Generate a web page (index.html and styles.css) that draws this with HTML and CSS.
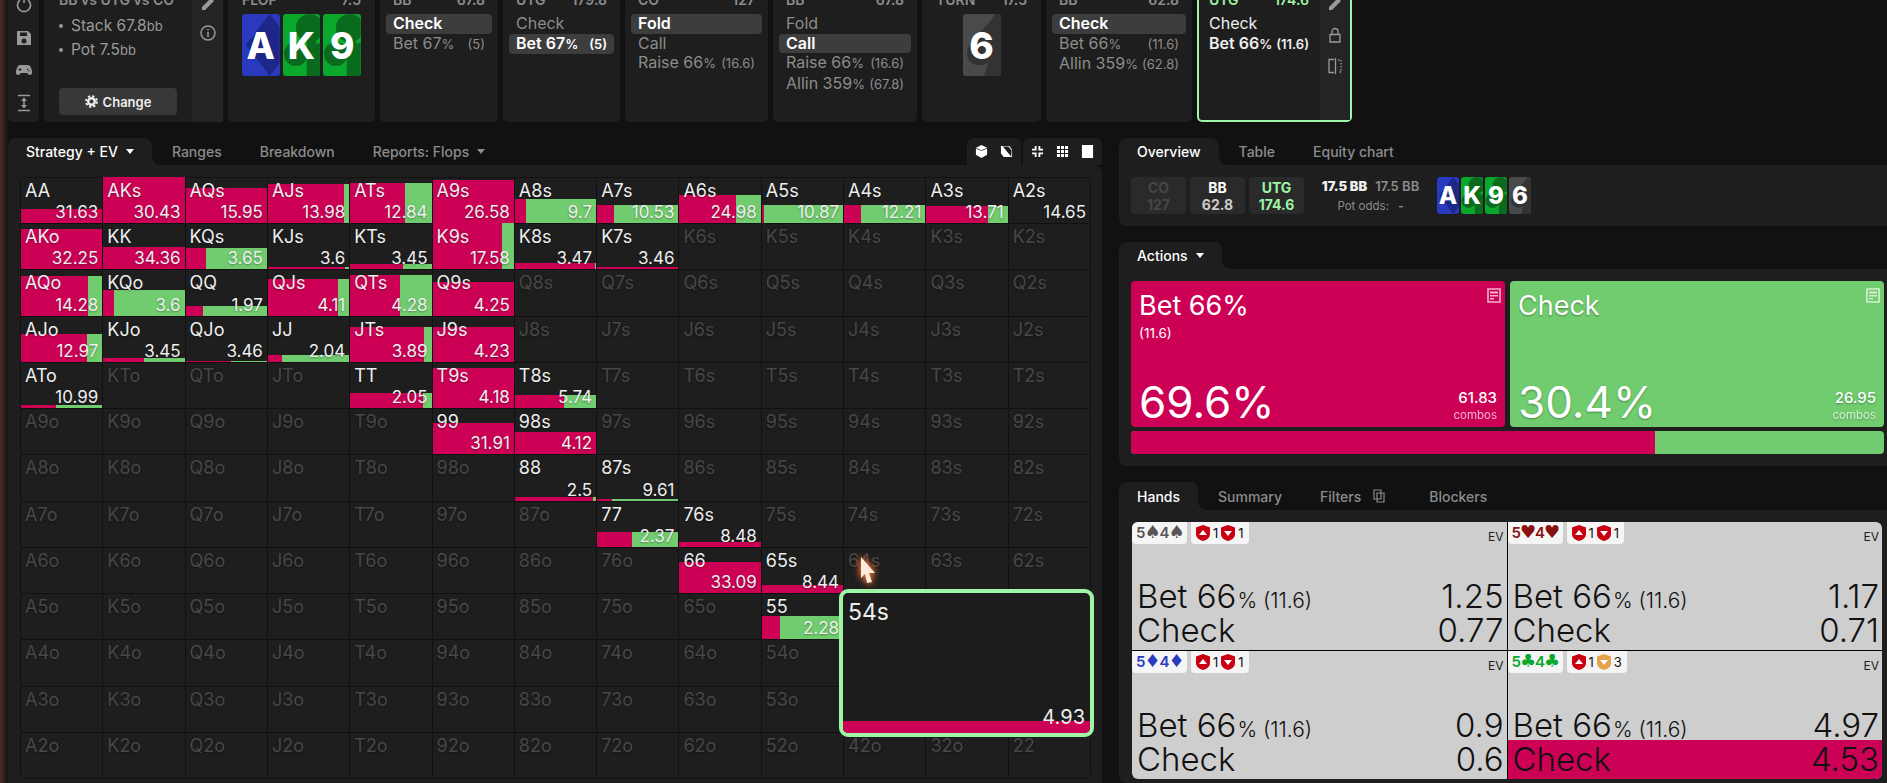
FILE: index.html
```html
<!DOCTYPE html>
<html lang="en">
<head>
  <meta charset="UTF-8">
  <meta name="viewport" content="width=device-width, initial-scale=1.0">
  <title>Solver - Strategy + EV</title>
  <link rel="stylesheet" href="styles.css">
</head>
<body>
  <svg class="defs" width="0" height="0">
    <symbol id="art-diamond" viewBox="0 0 38 62" preserveAspectRatio="none"><polygon points="28,0 52,31 28,62 4,31"/></symbol>
    <symbol id="art-club" viewBox="0 0 38 62" preserveAspectRatio="none"><circle cx="27" cy="14" r="14"/><circle cx="13" cy="40" r="12"/><circle cx="41" cy="40" r="12"/><polygon points="24,20 32,20 40,62 24,62"/></symbol>
    <symbol id="art-spade" viewBox="0 0 38 62" preserveAspectRatio="none"><path d="M32 0C25 14 4 26 4 40C4 50 15 54 25 49L21 62H40V0Z"/></symbol>
    <symbol id="shield-up" viewBox="0 0 14 16"><path fill="currentColor" d="M7 0L14 2.5V9C14 12.5 11 15 7 16C3 15 0 12.5 0 9V2.5Z"/><path fill="#fff" d="M7 5L11 10H3Z"/></symbol>
    <symbol id="shield-down" viewBox="0 0 14 16"><path fill="currentColor" d="M7 0L14 2.5V9C14 12.5 11 15 7 16C3 15 0 12.5 0 9V2.5Z"/><path fill="#fff" d="M3 6H11L7 11Z"/></symbol>
    <symbol id="note" viewBox="0 0 14 15"><path fill="none" stroke="currentColor" stroke-width="1.6" d="M1 1H13V14H1Z"/><path fill="currentColor" d="M3 3.5H11V5.5H3ZM3 7H11V8.5H3ZM3 10H7V11.5H3Z"/></symbol>
  </svg>

  <!-- hand tree -->
  <div class="topbar">
    <div class="panel side-icons">
      <svg class="ico" viewBox="0 0 18 18"><path fill="none" stroke="currentColor" stroke-width="1.6" d="M5 4A6.5 6.5 0 1 0 13 4M9 1V7"/></svg>
      <svg class="ico" viewBox="0 0 18 18"><path fill="currentColor" d="M2 2H13L16 5V16H2ZM5 3.5V7H12V3.5ZM9 9.5A2.5 2.5 0 1 0 9 14.5A2.5 2.5 0 1 0 9 9.5Z"/></svg>
      <svg class="ico" viewBox="0 0 18 18"><path fill="currentColor" d="M5 4H13C15 4 16 6 17 10C17.500 13 16 14.500 14.500 14C13 13.500 12.500 12 11.500 12H6.500C5.500 12 5 13.500 3.500 14C2 14.500 .5 13 1 10C2 6 3 4 5 4ZM4.500 7V8H3.500V9H4.500V10H5.500V9H6.500V8H5.500V7ZM12.500 7.500A.7 .7 0 1 0 12.500 8.900A.7 .7 0 1 0 12.500 7.500ZM14 9A.7 .7 0 1 0 14 10.400A.7 .7 0 1 0 14 9Z"/></svg>
      <svg class="ico" viewBox="0 0 18 18"><path fill="none" stroke="currentColor" stroke-width="1.6" d="M3 1.500H15M3 16.500H15M9 4.500V13.500"/><path fill="currentColor" d="M9 3.500L12 7H6ZM9 14.500L6 11H12Z"/></svg>
    </div>

    <div class="panel setup">
      <div class="setup-main">
        <div class="node-head">BB vs UTG vs CO</div>
        <ul class="setup-list">
          <li>Stack 67.8<small>bb</small></li>
          <li>Pot 7.5<small>bb</small></li>
        </ul>
        <button class="change-btn">
          <svg class="gear" viewBox="0 0 14 14"><circle cx="7" cy="7" r="3.500" fill="none" stroke="currentColor" stroke-width="2.600"/><circle cx="7" cy="7" r="5.800" fill="none" stroke="currentColor" stroke-width="2.200" stroke-dasharray="2.500 2.050"/></svg>
          Change
        </button>
      </div>
      <div class="node-strip">
        <svg class="ico" viewBox="0 0 18 18"><path fill="currentColor" d="M3 12L12 3L15 6L6 15H3Z"/></svg>
        <svg class="ico" viewBox="0 0 18 18"><circle cx="9" cy="9" r="7" fill="none" stroke="currentColor" stroke-width="1.500"/><path fill="currentColor" d="M8.200 8H9.800V13H8.200ZM8.200 5H9.800V6.600H8.200Z"/></svg>
      </div>
    </div>

    <div class="panel street">
      <div class="node-head"><span>FLOP</span><span>7.5</span></div>
      <div class="board">
        <div class="card c-blue"><svg><use href="#art-diamond"/></svg><b>A</b></div>
        <div class="card c-green"><svg><use href="#art-club"/></svg><b>K</b></div>
        <div class="card c-green"><svg><use href="#art-club"/></svg><b>9</b></div>
      </div>
    </div>

    <div class="panel node">
      <div class="node-head"><span>BB</span><span>67.8</span></div>
      <div class="act on"><span>Check</span></div>
      <div class="act"><span>Bet 67<small>%</small></span><em>(5)</em></div>
    </div>

    <div class="panel node">
      <div class="node-head"><span>UTG</span><span>179.8</span></div>
      <div class="act"><span>Check</span></div>
      <div class="act on"><span>Bet 67<small>%</small></span><em>(5)</em></div>
    </div>

    <div class="panel node">
      <div class="node-head"><span>CO</span><span>127</span></div>
      <div class="act on"><span>Fold</span></div>
      <div class="act"><span>Call</span></div>
      <div class="act"><span>Raise 66<small>%</small></span><em>(16.6)</em></div>
    </div>

    <div class="panel node">
      <div class="node-head"><span>BB</span><span>67.8</span></div>
      <div class="act"><span>Fold</span></div>
      <div class="act on"><span>Call</span></div>
      <div class="act"><span>Raise 66<small>%</small></span><em>(16.6)</em></div>
      <div class="act"><span>Allin 359<small>%</small></span><em>(67.8)</em></div>
    </div>

    <div class="panel street">
      <div class="node-head"><span>TURN</span><span>17.5</span></div>
      <div class="board">
        <div class="card c-gray"><svg><use href="#art-spade"/></svg><b>6</b></div>
      </div>
    </div>

    <div class="panel node">
      <div class="node-head"><span>BB</span><span>62.8</span></div>
      <div class="act on"><span>Check</span></div>
      <div class="act"><span>Bet 66<small>%</small></span><em>(11.6)</em></div>
      <div class="act"><span>Allin 359<small>%</small></span><em>(62.8)</em></div>
    </div>

    <div class="panel node current">
      <div class="current-main">
        <div class="node-head"><span>UTG</span><span>174.6</span></div>
        <div class="act bright"><span>Check</span></div>
        <div class="act bright strong"><span>Bet 66<small>%</small></span><em>(11.6)</em></div>
      </div>
      <div class="node-strip">
        <svg class="ico" viewBox="0 0 18 18"><path fill="currentColor" d="M3 12L12 3L15 6L6 15H3Z"/></svg>
        <svg class="ico" viewBox="0 0 18 18"><path fill="none" stroke="currentColor" stroke-width="1.300" d="M4 8.500H14V16H4ZM6 8.500V5.500A3 3 0 0 1 12 5.500V8.500"/></svg>
        <svg class="ico" viewBox="0 0 18 18"><path fill="none" stroke="currentColor" stroke-width="1.300" d="M8 2.500H3V15.500H8M9.500 1V17"/><path fill="none" stroke="currentColor" stroke-width="1.300" stroke-dasharray="1.500 1.500" d="M12 3H15V15H12"/></svg>
      </div>
    </div>
  </div>

  <div class="main">
    <!-- range grid -->
    <section class="left">
      <div class="tabs">
        <div class="tab active">Strategy + EV <i class="caret"></i></div>
        <div class="tab">Ranges</div>
        <div class="tab">Breakdown</div>
        <div class="tab">Reports: Flops <i class="caret dim"></i></div>
        <div class="tools">
          <div class="tool-group">
            <svg class="tool" viewBox="0 0 14 14"><path fill="#fff" d="M7 0L13 3V10.500L7 14L1 10.500V3Z"/><path fill="none" stroke="#1e1e1e" stroke-width=".8" d="M1 3.500L7 6L13 3.500"/></svg>
            <svg class="tool" viewBox="0 0 14 14"><path fill="#fff" d="M1 1H10L13 5V13H4L1 9Z"/><path fill="#1e1e1e" d="M3 1.500L12 12.500L12.500 6L9 1.500Z"/></svg>
          </div>
          <div class="tool-group">
            <svg class="tool" viewBox="0 0 14 14"><path fill="#fff" d="M4 1H6V6H1V4H4ZM8 1H10V4H13V6H8ZM1 8H6V13H4V10H1ZM8 8H13V10H10V13H8Z"/></svg>
            <svg class="tool" viewBox="0 0 14 14"><path fill="#fff" d="M1 1H4.300V4.300H1ZM5.400 1H8.600V4.300H5.400ZM9.700 1H13V4.300H9.700ZM1 5.400H4.300V8.600H1ZM5.400 5.400H8.600V8.600H5.400ZM9.700 5.400H13V8.600H9.700ZM1 9.700H4.300V13H1ZM5.400 9.700H8.600V13H5.400ZM9.700 9.700H13V13H9.700Z"/></svg>
            <svg class="tool" viewBox="0 0 14 14"><path fill="#fff" d="M1 0H13V14H1Z"/></svg>
          </div>
        </div>
      </div>
      <div class="panel grid-panel">
        <div class="grid-wrap">
          <div class="range-grid" id="rangeGrid"></div>
          <div class="zoom-cell">
            <div>54s</div>
            <div class="zoom-val">4.93</div>
            <div class="zoom-bar"></div>
          </div>
        </div>
      </div>
    </section>

    <section class="right">
      <div class="tabs">
        <div class="tab active">Overview</div>
        <div class="tab">Table</div>
        <div class="tab">Equity chart</div>
      </div>
      <div class="panel overview">
        <div class="chip off">CO<br>127</div>
        <div class="chip">BB<br><span>62.8</span></div>
        <div class="chip hot">UTG<br>174.6</div>
        <div class="pot">
          <div><b>17.5 BB</b><span>17.5 BB</span></div>
          <div class="odds">Pot odds: <i>-</i></div>
        </div>
        <div class="mini-board">
          <div class="card mini c-blue"><svg><use href="#art-diamond"/></svg><b>A</b></div>
          <div class="card mini c-green"><svg><use href="#art-club"/></svg><b>K</b></div>
          <div class="card mini c-green"><svg><use href="#art-club"/></svg><b>9</b></div>
          <div class="card mini c-gray"><svg><use href="#art-spade"/></svg><b>6</b></div>
        </div>
      </div>

      <div class="tabs gap">
        <div class="tab active">Actions <i class="caret"></i></div>
      </div>
      <div class="panel actions">
        <div class="action-cards">
          <div class="action-card pink">
            <svg class="note"><use href="#note"/></svg>
            <div class="ac-name">Bet 66%</div>
            <div class="ac-size">(11.6)</div>
            <div class="ac-foot">
              <div class="ac-pct">69.6%</div>
              <div class="ac-combos">61.83<small>combos</small></div>
            </div>
          </div>
          <div class="action-card green">
            <svg class="note"><use href="#note"/></svg>
            <div class="ac-name">Check</div>
            <div class="ac-foot">
              <div class="ac-pct">30.4%</div>
              <div class="ac-combos">26.95<small>combos</small></div>
            </div>
          </div>
        </div>
        <div class="split-bar"><div class="split-pink" style="width:69.6%"></div></div>
      </div>

      <div class="tabs gap tall">
        <div class="tab active">Hands</div>
        <div class="tab">Summary</div>
        <div class="tab">Filters
          <svg class="copy" viewBox="0 0 12 14"><path fill="none" stroke="currentColor" stroke-width="1.200" d="M1 1H8V10H1ZM4 4H11V13H4Z"/></svg>
        </div>
        <div class="tab">Blockers</div>
      </div>
      <div class="panel hands">
        <div class="hand-grid">
          <div class="hand">
            <div class="hand-top">
              <div class="pill s-spade">5<i>♠</i>4<i>♠</i></div>
              <div class="pill blockers"><svg class="shield"><use href="#shield-up"/></svg>1<svg class="shield"><use href="#shield-down"/></svg>1</div>
              <div class="ev">EV</div>
            </div>
            <div class="ev-row bet"><span>Bet 66<small>% (11.6)</small></span><span>1.25</span></div>
            <div class="ev-row"><span>Check</span><span>0.77</span></div>
          </div>
          <div class="hand">
            <div class="hand-top">
              <div class="pill s-heart">5<i>♥</i>4<i>♥</i></div>
              <div class="pill blockers"><svg class="shield"><use href="#shield-up"/></svg>1<svg class="shield"><use href="#shield-down"/></svg>1</div>
              <div class="ev">EV</div>
            </div>
            <div class="ev-row bet"><span>Bet 66<small>% (11.6)</small></span><span>1.17</span></div>
            <div class="ev-row"><span>Check</span><span>0.71</span></div>
          </div>
          <div class="hand">
            <div class="hand-top">
              <div class="pill s-diamond">5<i>♦</i>4<i>♦</i></div>
              <div class="pill blockers"><svg class="shield"><use href="#shield-up"/></svg>1<svg class="shield"><use href="#shield-down"/></svg>1</div>
              <div class="ev">EV</div>
            </div>
            <div class="ev-row bet"><span>Bet 66<small>% (11.6)</small></span><span>0.9</span></div>
            <div class="ev-row"><span>Check</span><span>0.6</span></div>
          </div>
          <div class="hand">
            <div class="hand-top">
              <div class="pill s-club">5<i>♣</i>4<i>♣</i></div>
              <div class="pill blockers"><svg class="shield"><use href="#shield-up"/></svg>1<svg class="shield amber"><use href="#shield-down"/></svg>3</div>
              <div class="ev">EV</div>
            </div>
            <div class="ev-row bet"><span>Bet 66<small>% (11.6)</small></span><span>4.97</span></div>
            <div class="ev-row best"><span>Check</span><span>4.53</span></div>
          </div>
        </div>
      </div>
    </section>
  </div>

  <svg class="pointer" viewBox="0 0 18 30"><path fill="#ffeade" d="M2 2L16 18H10L13 27L8 28L6 19L2 23Z"/></svg>

  <script src="script.js"></script>
</body>
</html>
```

FILE: styles.css
```css
* {
  box-sizing: border-box;
}
html {
  overflow: hidden;
}
body {
  font-family: Inter, "Liberation Sans", sans-serif;
  margin: 0;
  padding-left: 8px;
  height: 783px;
  overflow: hidden;
  color: #eee;
  background: linear-gradient(90deg, #4a2c22 0, #3a241c 3px, #17110f 8px, #111 8px);
}
.defs {
  position: absolute;
}
.panel {
  background-color: #1e1e1e;
}

/* top bar */
.topbar {
  display: grid;
  grid-template-columns: 31px 179px 147px 118px 117px 143px 144px 119px 146px 155px;
  grid-template-rows: 122px;
  column-gap: 5px;
  align-items: end;
  height: 122px;
  overflow: hidden;
}
.topbar .panel {
  height: 150px;
  border-radius: 0 0 5px 5px;
}
.side-icons {
  display: flex;
  flex-direction: column;
  align-items: center;
  gap: 14.5px;
  padding-top: 24px;
  color: #999;
}
.ico {
  width: 18px;
  height: 18px;
  flex: none;
}
.setup {
  display: flex;
}
.setup-main {
  flex: 1;
  padding: 20px 15px 0;
}
.node-strip {
  width: 31px;
  background-color: #242424;
  display: flex;
  flex-direction: column;
  align-items: center;
  gap: 11px;
  padding-top: 23px;
  color: #9a9a9a;
}
.node-head {
  display: flex;
  justify-content: space-between;
  font-size: 14px;
  line-height: 16px;
  font-weight: 600;
  color: #8c8c8c;
  margin-bottom: 6px;
}
.setup-list {
  list-style: none;
  margin: 6px 0 0;
  padding: 0;
  font-size: 15.500px;
  line-height: 24px;
  color: #9a9a9a;
}
.setup-list li {
  position: relative;
  padding-left: 12px;
}
.setup-list li::before {
  content: "";
  position: absolute;
  left: 0;
  top: 10px;
  width: 4px;
  height: 4px;
  border-radius: 50%;
  background: #9a9a9a;
}
.setup-list small {
  font-size: 13px;
}
.change-btn {
  display: flex;
  align-items: center;
  justify-content: center;
  gap: 5px;
  width: 118px;
  height: 27px;
  margin-top: 26px;
  border: 0;
  border-radius: 4px;
  background: #383838;
  color: #eee;
  font: 600 13px Inter, sans-serif;
}
.gear {
  width: 13px;
  height: 13px;
}
.street {
  padding: 20px 14px 0;
}
.board {
  display: flex;
  justify-content: center;
  gap: 3px;
}
.card {
  position: relative;
  width: 38px;
  height: 62px;
  border-radius: 3px;
  overflow: hidden;
  display: flex;
  align-items: center;
  justify-content: center;
}
.card svg {
  position: absolute;
  inset: 0;
  width: 100%;
  height: 100%;
}
.card b {
  position: relative;
  font-family: Inter, sans-serif;
  font-size: 37px;
  font-weight: 800;
  color: #fff;
}
.c-blue {
  background-color: #2a3abf;
  fill: #1c2788;
}
.c-green {
  background-color: #0aa92d;
  fill: #0a6b1f;
}
.c-gray {
  background-color: #4a4a4a;
  fill: #333;
}
.node {
  padding: 20px 6px 0;
}
.node .node-head {
  padding: 0 7px;
}
.act {
  display: flex;
  justify-content: space-between;
  align-items: baseline;
  padding: 0 7px;
  font-size: 16px;
  line-height: 19.5px;
  color: #8c8c8c;
}
.act small {
  font-size: 13px;
}
.act em {
  font-style: normal;
  font-size: 13px;
}
.act.on {
  background: #3d3d3d;
  border-radius: 4px;
  color: #fff;
  font-weight: 600;
}
.current {
  display: flex;
  padding: 0;
  border: 2px solid #9ef5a5;
  border-radius: 0 0 5px 5px;
}
.current-main {
  flex: 1;
  padding: 18px 4px 0 3px;
}
.current .node-head {
  color: #9ef5a5;
}
.current .act {
  padding: 0 7px;
}
.act.bright {
  color: #eee;
}
.act.strong {
  font-weight: 600;
}
.current .node-strip {
  width: 30px;
  padding-top: 21px;
  gap: 13px;
}

/* main area */
.main {
  display: flex;
  gap: 17px;
  height: 645px;
  margin-top: 16px;
}
.left {
  width: 1094px;
  flex: none;
}
.right {
  flex: 1;
  min-width: 0;
}
.tabs {
  display: flex;
  height: 27px;
  font-size: 14px;
  font-weight: 500;
  color: #8c8c8c;
}
.tabs.gap {
  margin-top: 16px;
}
.tabs.tall {
  height: 28px;
}
.tab {
  position: relative;
  display: flex;
  align-items: center;
  gap: 8px;
  padding: 0 19px;
  white-space: nowrap;
}
.tab.active {
  margin-right: 1px;
  padding: 0 18px;
  background-color: #1e1e1e;
  border-radius: 8px 8px 0 0;
  color: #fff;
}
.tab.active::after {
  content: "";
  position: absolute;
  right: -8px;
  bottom: 0;
  width: 8px;
  height: 8px;
  background: radial-gradient(circle at 100% 0, transparent 7.5px, #1e1e1e 8px);
}
.caret {
  width: 0;
  height: 0;
  border-left: 4px solid transparent;
  border-right: 4px solid transparent;
  border-top: 5px solid #fff;
}
.caret.dim {
  border-top-color: #8c8c8c;
}
.copy {
  width: 12px;
  height: 14px;
  margin: 0 6px 0 4px;
}
.tools {
  display: flex;
  gap: 2px;
  margin-left: auto;
  height: 27px;
}
.tool-group {
  display: flex;
  align-items: center;
  gap: 12px;
  padding: 0 8px;
  background-color: #1e1e1e;
  border-radius: 6px 6px 0 0;
}
.tool {
  width: 13px;
  height: 13px;
}

/* range grid */
.grid-panel {
  height: 618px;
  padding: 12px 11px 0 12px;
  border-radius: 0 8px 0 0;
}
.grid-wrap {
  position: relative;
}
.range-grid {
  display: grid;
  grid-template-columns: repeat(13, 1fr);
  grid-template-rows: repeat(13, 1fr);
  gap: 1px;
  width: 1071px;
  height: 602px;
  padding: 1px;
  background-color: #111;
  border-radius: 6px;
  overflow: hidden;
}
.cell {
  position: relative;
  display: flex;
  flex-direction: column;
  justify-content: space-between;
  padding: 3px 4px 1px;
  background-color: #1e1e1e;
  font-size: 18px;
  line-height: 20px;
  color: #eee;
  min-width: 0;
}
.cell.empty {
  color: #474747;
}
.cell span {
  position: relative;
  text-shadow: 0 1px 2px rgba(0, 0, 0, 0.35);
}
.cell .val {
  align-self: flex-end;
  font-size: 17px;
}
.bar {
  position: absolute;
  left: 0;
  right: 0;
  bottom: 0;
  display: flex;
  background-color: #70cc6e;
}
.bar i {
  display: block;
  background-color: #cc0055;
}
.zoom-cell {
  position: absolute;
  left: 819px;
  top: 412px;
  width: 255px;
  height: 148px;
  padding: 5px 5px 0;
  display: flex;
  flex-direction: column;
  background-color: #1c1c1c;
  border: 4px solid #9ef5a5;
  border-radius: 9px;
  overflow: hidden;
  font-size: 23px;
  line-height: 28px;
}
.zoom-val {
  position: relative;
  z-index: 1;
  margin-top: auto;
  margin-bottom: -8px;
  align-self: flex-end;
  font-size: 20px;
  line-height: 24px;
}
.zoom-bar {
  height: 12px;
  margin: 0 -5px;
  background-color: #cc0055;
}
.pointer {
  position: absolute;
  left: 859px;
  top: 555px;
  width: 18px;
  height: 30px;
  filter: drop-shadow(0 0 3px #f0773c) drop-shadow(0 0 3px #a8502a);
}

/* right side */
.overview {
  display: flex;
  align-items: flex-start;
  height: 61px;
  padding: 12px 0 0 12px;
  border-radius: 0 0 0 8px;
}
.chip {
  width: 55px;
  height: 37px;
  margin-right: 4px;
  border-radius: 4px;
  background: #2a2a2a;
  text-align: center;
  font-size: 14px;
  line-height: 17px;
  font-weight: 700;
  padding-top: 2px;
  color: #fff;
}
.chip span {
  color: #ccc;
}
.chip.off {
  color: #464646;
}
.chip.hot {
  color: #9ef5a5;
}
.pot {
  width: 101px;
  margin: 0 16px 0 12px;
  font-size: 13px;
  text-align: center;
  font-weight: 700;
  line-height: 18px;
  white-space: nowrap;
}
.pot span {
  color: #8c8c8c;
  margin-left: 8px;
  font-weight: 600;
}
.odds {
  margin-top: 2px;
  font-size: 11.5px;
  font-weight: 400;
  color: #8c8c8c;
}
.odds i {
  font-style: normal;
  font-weight: 700;
  margin-left: 6px;
}
.mini-board {
  display: flex;
  gap: 2px;
}
.card.mini {
  width: 22px;
  height: 37px;
}
.card.mini b {
  font-size: 24px;
}
.actions {
  height: 197px;
  padding: 12px 3px 12px 12px;
  border-radius: 0 0 0 8px;
}
.action-cards {
  display: grid;
  grid-template-columns: 1fr 1fr;
  gap: 5px;
  height: 146px;
}
.action-card {
  position: relative;
  display: flex;
  flex-direction: column;
  padding: 9px 8px 4px 8px;
  border-radius: 4px;
  color: #fff;
}
.action-card.pink {
  background-color: #cc0055;
}
.action-card.green {
  background-color: #70cc6e;
  text-shadow: 0 1px 2px rgba(0, 0, 0, 0.35);
}
.note {
  position: absolute;
  top: 7px;
  right: 4px;
  width: 14px;
  height: 15px;
  color: rgba(255, 255, 255, 0.7);
}
.ac-name {
  font-size: 27px;
  line-height: 32px;
}
.ac-size {
  margin-top: 3px;
  font-size: 13.5px;
  line-height: 16px;
}
.ac-foot {
  display: flex;
  justify-content: space-between;
  align-items: flex-end;
  margin-top: auto;
}
.ac-pct {
  font-size: 44px;
  line-height: 48px;
  margin-bottom: -3px;
}
.ac-combos {
  text-align: right;
  font-size: 15px;
  font-weight: 500;
  line-height: 18px;
}
.ac-combos small {
  display: block;
  font-size: 11.500px;
  font-weight: 400;
  line-height: 16px;
  opacity: 0.7;
}
.split-bar {
  height: 23px;
  margin-top: 4px;
  border-radius: 4px;
  overflow: hidden;
  background-color: #70cc6e;
}
.split-pink {
  height: 100%;
  background-color: #cc0055;
}
.hands {
  height: 273px;
  padding: 12px 5px 0 13px;
  border-radius: 0 0 0 8px;
}
.hand-grid {
  display: grid;
  grid-template-columns: 1fr 1fr;
  grid-template-rows: 128px 128px;
  gap: 1px;
  background-color: #000;
  border-radius: 6px;
  overflow: hidden;
}
.hand {
  display: flex;
  flex-direction: column;
  background-color: #cecece;
  color: #111;
}
.hand-top {
  display: flex;
  gap: 4px;
  margin-bottom: auto;
}
.pill {
  height: 22px;
  padding: 0 4px;
  background: #f5f5f5;
  border-radius: 0 0 4px 4px;
  font-size: 15px;
  font-weight: 600;
  line-height: 22px;
  white-space: nowrap;
}
.pill i {
  font-family: "DejaVu Sans", sans-serif;
  font-style: normal;
  font-size: 18px;
  line-height: 1;
  margin: 0 -1px;
}
.s-spade, .s-heart, .s-diamond, .s-club {
  width: 55px;
}
.s-spade { color: #555; }
.s-heart { color: #8a0f0f; }
.s-diamond { color: #2a3abf; }
.s-club { color: #0aa92d; }
.blockers {
  display: flex;
  align-items: center;
  gap: 3px;
  font-size: 13px;
  font-weight: 400;
  color: #111;
  padding: 0 5px;
}
.shield {
  width: 14px;
  height: 16px;
  color: #c8000f;
}
.shield.amber {
  color: #e5a24a;
}
.ev {
  margin: 8px 3px 0 auto;
  font-size: 12px;
  line-height: 14px;
  color: #222;
}
.ev-row {
  display: flex;
  justify-content: space-between;
  align-items: baseline;
  height: 39px;
  padding: 2px 3px 2px 5px;
  font-size: 33px;
  font-weight: 300;
  line-height: 35px;
}
.ev-row.bet {
  height: 35px;
  padding: 4px 3px 0 5px;
  line-height: 33px;
}
.ev-row small {
  font-size: 21px;
  margin-left: 1px;
}
.ev-row.best {
  background-color: #cc0055;
}
```

FILE: script.js
```js
// height of the bar in px, share of the pink part, EV
const hands = {
  'AA': [14, 100, '31.63'], 'AKs': [46, 100, '30.43'], 'AQs': [35, 100, '15.95'], 'AJs': [39, 93, '13.98'],
  'ATs': [40, 67, '12.84'], 'A9s': [43, 100, '26.58'], 'A8s': [24, 14, '9.7'], 'A7s': [18, 21, '10.53'],
  'A6s': [28, 69, '24.98'], 'A5s': [18, 3, '10.87'], 'A4s': [18, 21, '12.21'], 'A3s': [17, 76, '13.71'],
  'A2s': [0, 100, '14.65'],
  'AKo': [40, 100, '32.25'], 'KK': [22, 100, '34.36'], 'KQs': [21, 25, '3.65'], 'KJs': [2, 95, '3.6'],
  'KTs': [5, 65, '3.45'], 'K9s': [46, 86, '17.58'], 'K8s': [6, 98, '3.47'], 'K7s': [2, 100, '3.46'],
  'AQo': [40, 82, '14.28'], 'KQo': [26, 13, '3.6'], 'QQ': [10, 21, '1.97'], 'QJs': [37, 86, '4.11'],
  'QTs': [41, 61, '4.28'], 'Q9s': [34, 100, '4.25'],
  'AJo': [28, 81, '12.97'], 'KJo': [4, 50, '3.45'], 'QJo': [1, 56, '3.46'], 'JJ': [7, 17, '2.04'],
  'JTs': [35, 91, '3.89'], 'J9s': [35, 100, '4.23'],
  'ATo': [3, 43, '10.99'], 'TT': [15, 90, '2.05'], 'T9s': [40, 100, '4.18'], 'T8s': [13, 61, '5.74'],
  '99': [31, 100, '31.91'], '98s': [22, 100, '4.12'],
  '88': [4, 96, '2.5'], '87s': [2, 18, '9.61'],
  '77': [15, 43, '2.37'], '76s': [5, 100, '8.48'],
  '66': [31, 100, '33.09'], '65s': [8, 100, '8.44'],
  '55': [23, 22, '2.28']
};

const ranks = 'AKQJT98765432';
const grid = document.getElementById('rangeGrid');

for (let row = 0; row < 13; row++) {
  for (let col = 0; col < 13; col++) {
    let name = ranks[row] + ranks[col];
    if (row < col) name += 's';
    if (row > col) name = ranks[col] + ranks[row] + 'o';

    const cell = document.createElement('div');
    const hand = hands[name];
    cell.className = hand ? 'cell' : 'cell empty';
    if (hand) {
      cell.innerHTML = `
        <div class="bar" style="height:${hand[0]}px"><i style="width:${hand[1]}%"></i></div>
        <span>${name}</span>
        <span class="val">${hand[2]}</span>
      `;
    } else if (row < 9 || row > 11 || col < 10) {
      // the hovered 54s cell sits over the others
      cell.innerHTML = `<span>${name}</span>`;
    }
    grid.appendChild(cell);
  }
}
```
